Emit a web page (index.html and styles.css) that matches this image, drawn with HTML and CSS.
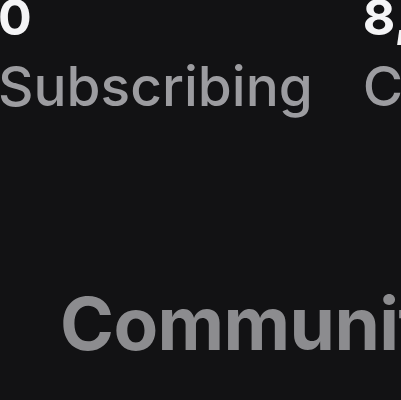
FILE: index.html
```html
<!DOCTYPE html>
<html lang="en">
<head>
  <meta charset="UTF-8">
  <title>Profile</title>
  <link rel="stylesheet" href="styles.css">
</head>
<body>
  <div class="stats">
    <div class="stat">
      <div class="count">0</div>
      <div class="label">Subscribing</div>
    </div>
    <div class="stat">
      <div class="count">8,</div>
      <div class="label">C</div>
    </div>
  </div>

  <h2 class="section">Community</h2>
</body>
</html>
```

FILE: styles.css
```css
body {
  margin: 0;
  width: 401px;
  height: 400px;
  overflow: hidden;
  background: #121214;
  font-family: Inter, "Liberation Sans", sans-serif;
}

.stats {
  display: flex;
  gap: 50px;
  margin-top: -8px;
  margin-left: -2px;
  white-space: nowrap;
}

.count {
  color: #f4f4f6;
  font-size: 50px;
  font-weight: 700;
  line-height: 50px;
}

.label {
  color: #9c9ca0;
  font-size: 55px;
  font-weight: 500;
  line-height: 88px;
}

.section {
  margin: 154px 0 0 60px;
  color: #8c8c8f;
  font-size: 73px;
  font-weight: 700;
  letter-spacing: -0.6px;
  line-height: 80px;
  white-space: nowrap;
}
```
